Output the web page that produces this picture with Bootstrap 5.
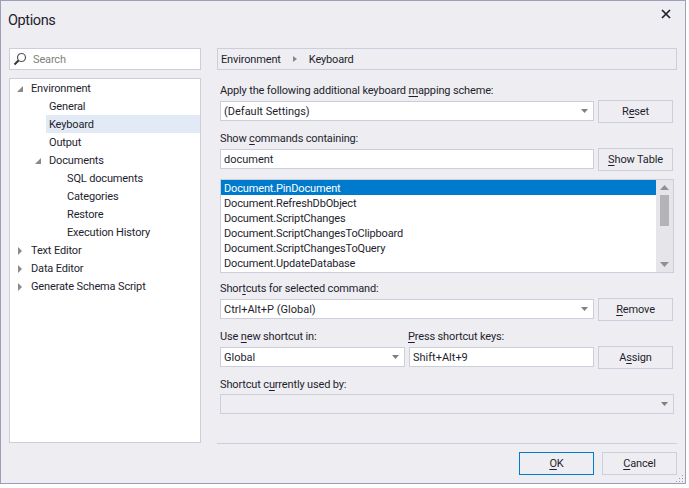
<!DOCTYPE html>
<html lang="en">
<head>
<meta charset="utf-8">
<title>Options</title>
<link href="https://cdn.jsdelivr.net/npm/bootstrap@5.3.0/dist/css/bootstrap.min.css" rel="stylesheet">
<style>
html,body{background:#fff;margin:0;padding:0}
body{font:11px/15px Roboto,"Noto Sans",sans-serif;color:#1e1e2e;letter-spacing:-.15px}
.win{width:686px;height:484px;background:#eeeef2;border:1px solid #9b9fb9;position:relative}
.ttl{height:47px;padding:10px 0 0 7px;font-size:14.5px;line-height:20px;letter-spacing:-.4px}
.cls{position:absolute;left:659px;top:7px;width:12px;height:12px}
.body-row{padding-left:8px;gap:16px;height:395px}
.lft{width:192px}
.rgt{width:460px}
.srch{height:22px;background:#fff;border:1px solid #cccedb;padding:0 0 0 3px;gap:6px;color:#808080;margin-bottom:8px}
.tree{height:365px;background:#fff;border:1px solid #cccedb}
.tr{height:18px;line-height:18px;padding-top:2px;display:flex;align-items:center;white-space:nowrap}
.l0{padding-left:6px}.l1{margin-left:36px;padding-left:3px}.l1a{padding-left:24px}.l2{padding-left:57px}
.sel{background:#e2eaf6}
.tg{width:15px;flex:none;display:flex;align-items:center}
.crumb{height:22px;border:1px solid #cccedb;padding:0 3px;gap:11px;margin-bottom:12px}
.frm{padding-left:3px;width:456px}
.lbl{display:block;margin:0;height:15px;line-height:18px;white-space:nowrap}
.lbl u,.bn u{text-underline-offset:2px}
.form-control.fld,.form-select.fld{height:20px;min-height:0;border:1px solid #cccedb;border-radius:0;padding:0 3px;font-size:11px;line-height:18px;color:#1e1e2e;background-color:#fff;box-shadow:none}
.form-select.fld{padding-top:1px;background-position:right 5px center;background-size:7px 4px;background-image:url("data:image/svg+xml,%3csvg xmlns='http://www.w3.org/2000/svg' viewBox='0 0 7 4'%3e%3cpath fill='%23808080' d='M0 0h7L3.500 4z'/%3e%3c/svg%3e")}
.form-select.fld:disabled{background-color:#eeeef2}
.rw{gap:4px;align-items:flex-start;margin-top:3px}
.gapb{margin-bottom:7px}
.w374{width:374px;flex:none;margin-top:1px}
.bn.btn{width:75px;height:23px;padding:1px 0 0;flex:none;background:#eeeef2;border:1px solid #cccedb;border-radius:0;font-size:11px;line-height:20px;color:#1e1e2e;letter-spacing:-.15px}
.bn.pri{border-color:#007acc}
.lst{height:94px;width:454px;border:1px solid #cccedb;background:#fff;margin:8px 0 7px}
.items{flex:1;min-width:0}
.it{height:15px;line-height:17px;padding-left:3px;white-space:nowrap}
.on{background:#007acc;color:#fff}
.sb{width:17px;background:#e6e6ea;padding:0 3px;display:flex;flex-direction:column;align-items:center;justify-content:space-between}
.thumb{width:9px;height:31px;background:#b4b4b8;margin-top:5px;margin-bottom:auto}
.up{margin-top:5px}.dn{margin-bottom:5px}
.hr{height:1px;background:#cccedb;margin:0 8px 0 0}
.ft{position:relative;height:40px;padding:8px 8px 0 0;gap:8px}
.grip{position:absolute;right:1px;bottom:1px;width:10px;height:10px}
.pf1{width:188px}.pf2{flex:1}
.cmb1,.cmb2{width:185px;flex:none;margin-top:1px}
.wide{width:454px;margin-top:3px}
.ftwrap{margin-left:216px}
</style>
</head>
<body>
<div class="win">
  <div class="ttl">Options</div>
  <svg class="cls" viewBox="0 0 12 12"><path d="M2 2l8 8M10 2l-8 8" stroke="#1e1e2e" stroke-width="1.700" fill="none"/></svg>
  <div class="d-flex body-row">
    <div class="lft">
      <div class="srch d-flex align-items-center">
        <svg width="14" height="14" viewBox="0 0 14 14"><circle cx="8.500" cy="5.500" r="4" fill="none" stroke="#555" stroke-width="1.200"/><path d="M5.500 8.500L1.500 12.500" stroke="#333" stroke-width="2"/></svg>
        <span>Search</span>
      </div>
      <div class="tree">
        <div class="tr l0"><span class="tg"><svg width="8" height="8" viewBox="0 0 8 8"><path d="M7 1v6H1z" fill="#8a8a8a"/></svg></span><span>Environment</span></div>
        <div class="tr l1">General</div>
        <div class="tr l1 sel">Keyboard</div>
        <div class="tr l1">Output</div>
        <div class="tr l1a"><span class="tg"><svg width="8" height="8" viewBox="0 0 8 8"><path d="M7 1v6H1z" fill="#8a8a8a"/></svg></span><span>Documents</span></div>
        <div class="tr l2">SQL documents</div>
        <div class="tr l2">Categories</div>
        <div class="tr l2">Restore</div>
        <div class="tr l2">Execution History</div>
        <div class="tr l0"><span class="tg"><svg width="8" height="10" viewBox="0 0 8 10"><path d="M2 1l4 4-4 4z" fill="#8a8a8a"/></svg></span><span>Text Editor</span></div>
        <div class="tr l0"><span class="tg"><svg width="8" height="10" viewBox="0 0 8 10"><path d="M2 1l4 4-4 4z" fill="#8a8a8a"/></svg></span><span>Data Editor</span></div>
        <div class="tr l0"><span class="tg"><svg width="8" height="10" viewBox="0 0 8 10"><path d="M2 1l4 4-4 4z" fill="#8a8a8a"/></svg></span><span>Generate Schema Script</span></div>
      </div>
    </div>
    <div class="rgt">
      <div class="crumb d-flex align-items-center">
        <span>Environment</span>
        <svg width="6" height="8" viewBox="0 0 6 8"><path d="M1 1l4 3-4 3z" fill="#8a8a8a"/></svg>
        <span>Keyboard</span>
      </div>
      <div class="frm">
        <span class="lbl">Apply the following additional keyboard <u>m</u>apping scheme:</span>
        <div class="d-flex rw gapb">
          <select class="form-select fld w374"><option>(Default Settings)</option></select>
          <button class="btn bn" type="button">R<u>e</u>set</button>
        </div>
        <span class="lbl">Show <u>c</u>ommands containing:</span>
        <div class="d-flex rw">
          <input class="form-control fld w374" value="document">
          <button class="btn bn" type="button"><u>S</u>how Table</button>
        </div>
        <div class="lst d-flex">
          <div class="items">
            <div class="it on">Document.PinDocument</div>
            <div class="it">Document.RefreshDbObject</div>
            <div class="it">Document.ScriptChanges</div>
            <div class="it">Document.ScriptChangesToClipboard</div>
            <div class="it">Document.ScriptChangesToQuery</div>
            <div class="it">Document.UpdateDatabase</div>
          </div>
          <div class="sb">
            <svg class="up" width="9" height="5" viewBox="0 0 9 5"><path d="M0 5h9L4.500 0z" fill="#8f8f94"/></svg>
            <div class="thumb"></div>
            <svg class="dn" width="9" height="5" viewBox="0 0 9 5"><path d="M0 0h9L4.500 5z" fill="#8f8f94"/></svg>
          </div>
        </div>
        <span class="lbl">Shor<u>t</u>cuts for selected command:</span>
        <div class="d-flex rw gapb">
          <select class="form-select fld w374"><option>Ctrl+Alt+P (Global)</option></select>
          <button class="btn bn" type="button"><u>R</u>emove</button>
        </div>
        <div class="d-flex">
          <span class="lbl pf1">Use <u>n</u>ew shortcut in:</span>
          <span class="lbl pf2"><u>P</u>ress shortcut keys:</span>
        </div>
        <div class="d-flex rw gapb">
          <select class="form-select fld cmb1"><option>Global</option></select>
          <input class="form-control fld cmb2" value="Shift+Alt+9">
          <button class="btn bn" type="button">A<u>s</u>sign</button>
        </div>
        <span class="lbl">Shortcut c<u>u</u>rrently used by:</span>
        <select class="form-select fld wide" disabled><option></option></select>
      </div>
    </div>
  </div>
  <div class="ftwrap">
    <div class="hr"></div>
    <div class="ft d-flex justify-content-end">
      <button class="btn bn pri" type="button"><u>O</u>K</button>
      <button class="btn bn" type="button"><u>C</u>ancel</button>
      <svg class="grip" viewBox="0 0 10 10"><g fill="#9a9aa5"><rect x="8" y="8" width="1" height="1"/><rect x="5" y="8" width="1" height="1"/><rect x="2" y="8" width="1" height="1"/><rect x="8" y="5" width="1" height="1"/><rect x="5" y="5" width="1" height="1"/><rect x="8" y="2" width="1" height="1"/></g></svg>
    </div>
  </div>
</div>
</body>
</html>
